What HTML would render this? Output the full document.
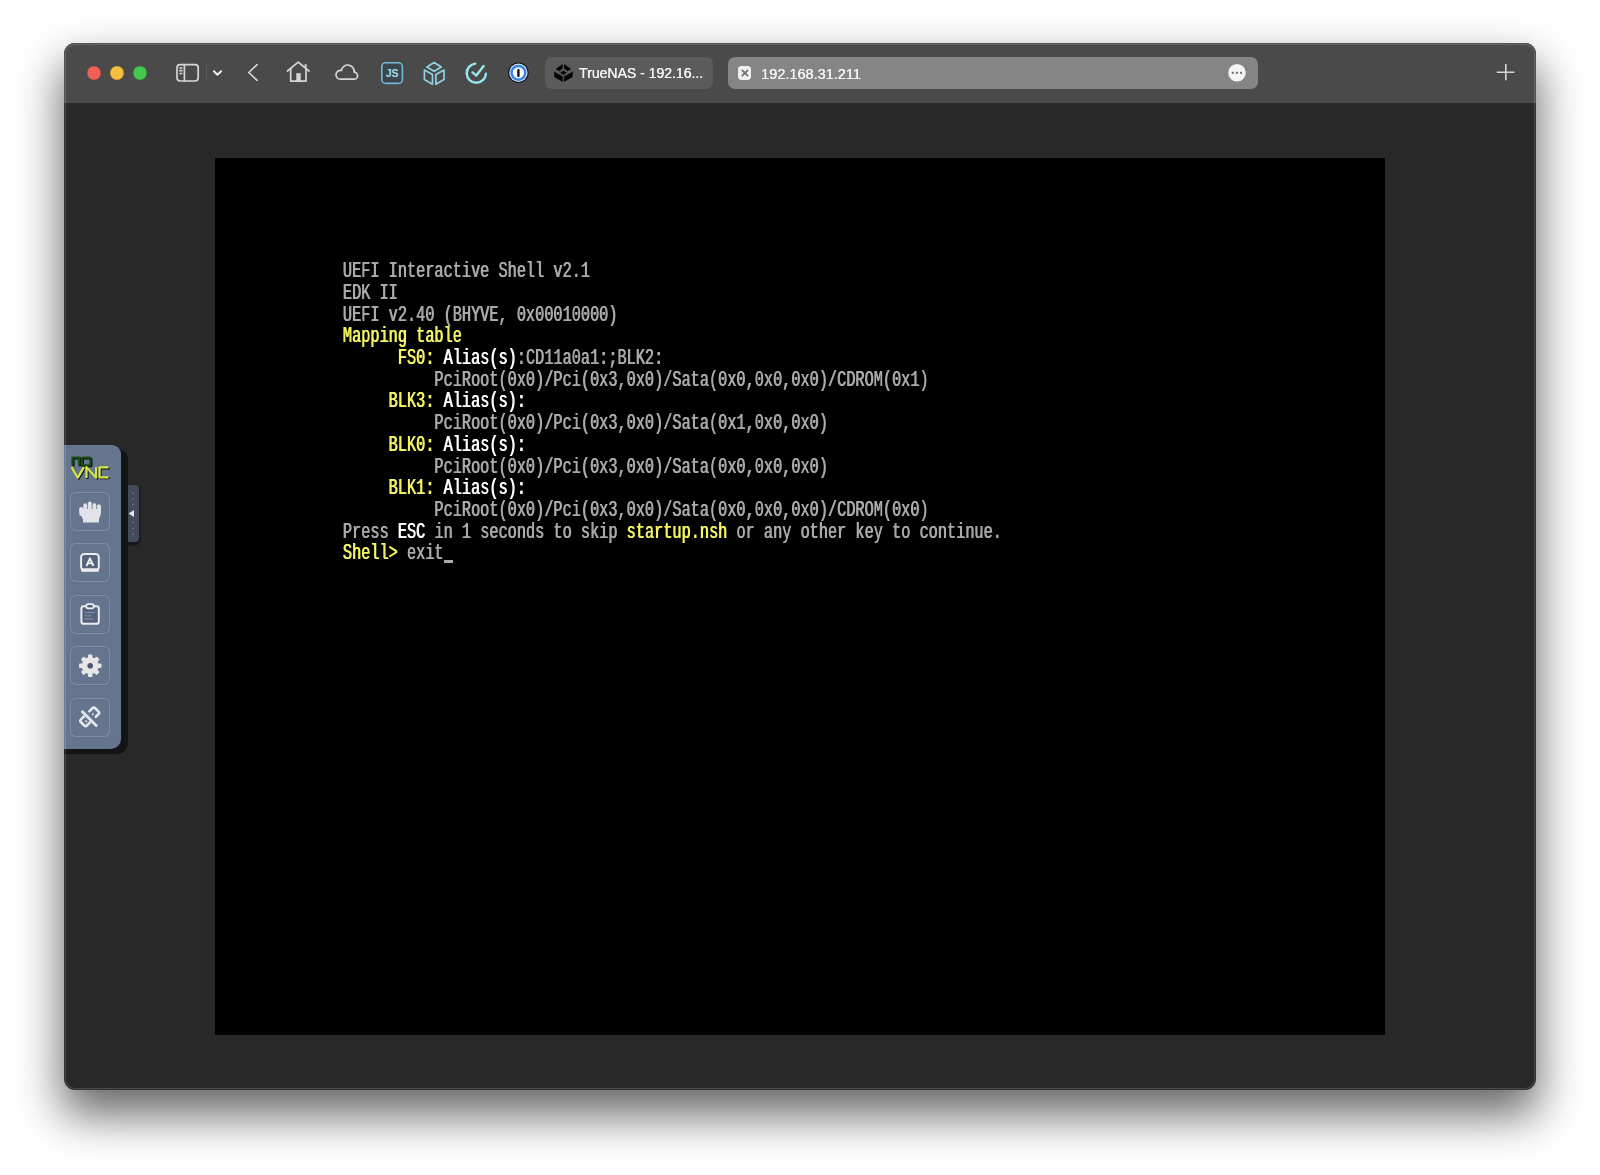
<!DOCTYPE html>
<html><head><meta charset="utf-8">
<style>
html,body{margin:0;padding:0;}
body{width:1600px;height:1175px;overflow:hidden;background:#fff;position:relative;font-family:"Liberation Sans",sans-serif;}
.win{position:absolute;left:64px;top:43px;width:1472px;height:1047px;border-radius:11px;background:#282828;box-shadow:0 23px 46px 2px rgba(0,0,0,0.6);overflow:hidden;}
.winborder{position:absolute;left:64px;top:43px;width:1472px;height:1047px;border-radius:11px;box-shadow:inset 0 0 0 1px rgba(255,255,255,0.05);pointer-events:none;}
.winborder2{position:absolute;left:65px;top:44px;width:1470px;height:1045px;border-radius:10px;box-shadow:inset 0 0 0 1px rgba(255,255,255,0.15);pointer-events:none;}
.tb{position:absolute;left:0;top:0;width:1472px;height:60px;background:#4a4a4a;}
.abs{position:absolute;}
.screen{position:absolute;left:150.6px;top:115px;width:1170.8px;height:877.2px;background:#000;}
.term{position:absolute;left:0;top:0;font-family:"Liberation Mono",monospace;font-weight:normal;font-size:15.25px;white-space:pre;color:#aaa;text-shadow:0.7px 0 0 currentColor;}
.ln{position:absolute;left:128px;height:16px;line-height:16px;transform:scaleY(1.49);transform-origin:0 0;}
.tabtxt,.urltxt{font-size:14.5px;color:#f2f2f2;line-height:16px;white-space:nowrap;text-shadow:0.35px 0 0 currentColor;will-change:transform;}
.nvb{position:absolute;left:6.3px;width:39.3px;height:39.3px;border-radius:6px;box-shadow:inset 0 0 0 1px rgba(255,255,255,0.17);}
.y{color:#f5f562}.w{color:#fff}
</style></head><body>
<div class="win">
  <div class="tb">
    <div class="abs" style="left:23px;top:23.3px;width:13.8px;height:13.8px;border-radius:50%;background:#ef6158;box-shadow:inset 0 0 0 0.5px rgba(0,0,0,0.25)"></div>
    <div class="abs" style="left:46.1px;top:23.3px;width:13.8px;height:13.8px;border-radius:50%;background:#f5be3e;box-shadow:inset 0 0 0 0.5px rgba(0,0,0,0.25)"></div>
    <div class="abs" style="left:69px;top:23.3px;width:13.8px;height:13.8px;border-radius:50%;background:#45c84f;box-shadow:inset 0 0 0 0.5px rgba(0,0,0,0.25)"></div>
    <svg class="abs" style="left:0;top:0" width="1472" height="60" viewBox="0 0 1472 60">
      <g fill="none" stroke="#d6d6d6" stroke-width="1.7" stroke-linecap="round" stroke-linejoin="round">
        <!-- sidebar -->
        <rect x="113" y="21.6" width="21.2" height="16.4" rx="3.2"/>
        <line x1="120.4" y1="21.6" x2="120.4" y2="38"/>
        <line x1="116" y1="25" x2="117.8" y2="25"/><line x1="116" y1="27.7" x2="117.8" y2="27.7"/><line x1="116" y1="30.5" x2="117.8" y2="30.5"/>
        <!-- chevron down -->
        <polyline points="149.9,28.3 153.5,31.7 157.1,28.3" stroke="#f0f0f0" stroke-width="2"/>
        <!-- back -->
        <polyline points="193,21.7 184.8,29.5 193,37.3"/>
        <!-- home -->
        <polyline points="223.5,28 234.2,19.2 245,28"/>
        <polyline points="226.7,25.5 226.7,38.2 242,38.2 242,25.5"/>
        <line x1="241.6" y1="21.2" x2="241.6" y2="25" stroke-width="2" stroke-linecap="butt"/>
        <!-- cloud -->
        <path d="M276.4,36.2 A4.4,4.4 0 1 1 277.45,27.53 A6.4,6.4 0 0 1 290.14,29.2 A3.5,3.5 0 0 1 290,36.2 Z"/>
      </g>
      <rect x="232.3" y="30.2" width="4.4" height="8" fill="#d6d6d6"/>
      <line x1="118.9" y1="22" x2="118.9" y2="22" />
      <line x1="142.6" y1="21" x2="142.6" y2="37" stroke="#5a5a5a" stroke-width="1"/>
      <!-- JS -->
      <rect x="317.8" y="19.8" width="20.6" height="20.6" rx="4" fill="#3c454c" stroke="#72bcd8" stroke-width="1.6"/>
      <text x="328.1" y="34.3" text-anchor="middle" font-family="Liberation Sans" font-weight="bold" font-size="10.5" fill="#a9dcf2">JS</text>
      <!-- cube -->
      <g fill="none" stroke="#90d2e2" stroke-width="1.7" stroke-linejoin="round">
        <path d="M370.1,19.6 L377.3,23.9 L370.1,28.2 L362.9,23.9 Z"/>
        <path d="M360.4,27 L368.5,31.6 L368.5,41.2 L360.4,36.6 Z"/>
        <path d="M380,27 L371.9,31.6 L371.9,41.2 L380,36.6 Z"/>
      </g>
      <!-- check -->
      <g fill="none" stroke="#96e8ee" stroke-width="2.4" stroke-linecap="round" stroke-linejoin="round">
        <path d="M411.3,20.6 A9.6,9.6 0 1 0 421.9,30.8"/>
        <polyline points="408.6,29.4 412.3,32.6 419.6,23"/>
      </g>
      <!-- 1password -->
      <circle cx="454.4" cy="29.8" r="10.3" fill="#101216"/>
      <circle cx="454.4" cy="29.8" r="9.2" fill="#d2e8fb"/>
      <circle cx="454.4" cy="29.8" r="8.1" fill="#3b84e2"/>
      <circle cx="454.4" cy="29.8" r="5.6" fill="#f6fbff"/>
      <rect x="453.2" y="26" width="2.4" height="7.9" rx="1" fill="#141414"/>
    </g>
    </svg>
    <div class="abs" style="left:481px;top:14.2px;width:168px;height:31.6px;border-radius:7px;background:#5b5b5b"></div>
    <svg class="abs" style="left:490.4px;top:21.25px" width="20" height="18" viewBox="0 0 20 18">
      <g fill="#050505" stroke="#050505" stroke-width="0.3" stroke-linejoin="round">
        <path d="M1.91,5.06 L8.48,0.25 L8.63,4.22 L5.35,6.94 Z"/>
        <path d="M16.91,5.06 L10.35,0.25 L10.19,4.22 L13.48,6.94 Z"/>
        <path d="M6.44,8.75 L9.41,6.63 L12.38,8.75 L9.41,10.88 Z"/>
        <path d="M0.1,7.75 L8.63,12.66 L8.63,17.66 L0.5,12.97 Z"/>
        <path d="M18.73,7.75 L10.19,12.66 L10.19,17.66 L18.32,12.97 Z"/>
      </g>
    </svg>
    <div class="abs tabtxt" style="left:515.3px;top:22px;font-size:14px">TrueNAS - 192.16...</div>
    <div class="abs" style="left:663.5px;top:14.2px;width:530px;height:31.6px;border-radius:7px;background:#858585"></div>
    <div class="abs" style="left:673.5px;top:23px;width:13.8px;height:14px;border-radius:3.4px;background:#f0f0f0"></div>
    <svg class="abs" style="left:673.5px;top:23px" width="14" height="14" viewBox="0 0 14 14"><g stroke="#747474" stroke-width="1.8" stroke-linecap="round"><line x1="4.3" y1="4.4" x2="9.6" y2="9.7"/><line x1="9.6" y1="4.4" x2="4.3" y2="9.7"/></g></svg>
    <div class="abs urltxt" style="left:697px;top:23px">192.168.31.211</div>
    <svg class="abs" style="left:1163px;top:20px" width="20" height="20" viewBox="0 0 20 20"><circle cx="10" cy="9.8" r="8.8" fill="#f4f4f4"/><g fill="#6b6b6b"><rect x="4.8" y="8.8" width="2" height="2"/><rect x="8.9" y="8.8" width="2" height="2"/><rect x="13.1" y="8.8" width="2" height="2"/></g></svg>
    <svg class="abs" style="left:1430px;top:18px" width="24" height="24" viewBox="0 0 24 24"><g stroke="#d8d8d8" stroke-width="1.6" stroke-linecap="round"><line x1="11.8" y1="3.5" x2="11.8" y2="18.7"/><line x1="3.4" y1="11.2" x2="19.8" y2="11.2"/></g></svg>
  </div>
  <!-- noVNC panel -->
  <div class="abs" style="left:0;top:406px;width:63.6px;height:304.5px;border-radius:0 10px 11px 0;background:#131416;filter:blur(0.5px)"></div>
  <div class="abs" style="left:0;top:401.7px;width:57.2px;height:304.3px;border-radius:0 9px 10px 0;background:#66758e"></div>
  <div class="abs" style="left:62px;top:443px;width:14px;height:58.5px;border-radius:0 5px 5px 0;background:#141518;filter:blur(0.8px)"></div>
  <div class="abs" style="left:63.7px;top:441.5px;width:11.3px;height:57px;border-radius:0 4px 4px 0;background:#434a5a"></div>
  <svg class="abs" style="left:63.7px;top:441.5px" width="12" height="57" viewBox="0 0 12 57">
    <g fill="#7a8398"><circle cx="5.1" cy="8.2" r="0.8"/><circle cx="5.1" cy="14" r="0.8"/><circle cx="5.1" cy="19.5" r="0.8"/><circle cx="5.1" cy="37.5" r="0.8"/><circle cx="5.1" cy="43.5" r="0.8"/><circle cx="5.1" cy="49.5" r="0.8"/></g>
    <path d="M0.6,28.5 L6,25 L6,32 Z" fill="#e8e8ec"/>
  </svg>
  <!-- logo -->
  <svg class="abs" style="left:0;top:400px" width="58" height="50" viewBox="0 400 58 50">
    <g transform="translate(0.9,0.9)" fill="none" stroke="#0a0f08" stroke-width="2.3" stroke-linejoin="round">
      <path d="M8.5,422.3 V414.5 H15.2 V422.3"/>
      <rect x="17.8" y="414.5" width="8.7" height="7.8" rx="1"/>
      <polyline points="7.6,424.2 13.8,434.6 20,424.2"/>
      <polyline points="22.5,435 22.5,424.2 32.2,434.6 32.2,424.2"/>
      <polyline points="44.6,424.4 35.6,424.4 35.6,434.3 44.6,434.3"/>
    </g>
    <g fill="none" stroke="#184a12" stroke-width="2.2" stroke-linejoin="round">
      <path d="M8.5,422.3 V414.5 H15.2 V422.3"/>
      <rect x="17.8" y="414.5" width="8.7" height="7.8" rx="1"/>
    </g>
    <g fill="none" stroke="#d4e44c" stroke-width="2.3" stroke-linejoin="round">
      <polyline points="7.6,424.2 13.8,434.6 20,424.2"/>
      <polyline points="22.5,435 22.5,424.2 32.2,434.6 32.2,424.2"/>
      <polyline points="44.6,424.4 35.6,424.4 35.6,434.3 44.6,434.3"/>
    </g>
  </svg>
  <!-- buttons -->
  <div class="nvb" style="top:448.5px"></div>
  <div class="nvb" style="top:500px"></div>
  <div class="nvb" style="top:551.5px"></div>
  <div class="nvb" style="top:603px"></div>
  <div class="nvb" style="top:654.5px"></div>
  <svg class="abs" style="left:0;top:400px" width="58" height="310" viewBox="0 400 58 310">
    <!-- hand -->
    <g fill="#e2e3ea">
      <rect x="19.3" y="460.2" width="3.8" height="11" rx="1.9"/>
      <rect x="23.9" y="458.6" width="3.8" height="11" rx="1.9"/>
      <rect x="28.5" y="460.2" width="3.8" height="11" rx="1.9"/>
      <rect x="33.1" y="461.3" width="3.8" height="10" rx="1.9"/>
      <rect x="15.3" y="464" width="3.8" height="9" rx="1.9"/>
      <path d="M15.3,468 L19,476.5 L19,479.4 L35,479.4 L35,476 L36.9,471 L36.9,466 L15.3,466 Z"/>
    </g>
    <!-- keyboard A -->
    <rect x="17.1" y="510.9" width="17.7" height="16.4" rx="3.2" fill="#56627b" stroke="#ececf0" stroke-width="2"/>
    <rect x="17.1" y="525.3" width="17.7" height="3.4" rx="1.5" fill="#ececf0"/>
    <path d="M22.4,523 L25.95,515.3 L29.5,523 M23.6,520.4 H28.3" fill="none" stroke="#ececf0" stroke-width="1.9" stroke-linejoin="round"/>
    <!-- clipboard -->
    <rect x="17.4" y="563.2" width="17.4" height="17.6" rx="2.4" fill="#56627b" stroke="#ececf0" stroke-width="2"/>
    <rect x="22.2" y="561.2" width="7.6" height="4.2" rx="2.1" fill="#56627b" stroke="#ececf0" stroke-width="1.8"/>
    <g stroke="#8494b4" stroke-width="1"><line x1="20.8" y1="569.6" x2="31.2" y2="569.6"/><line x1="20.8" y1="572.8" x2="27.5" y2="572.8"/><line x1="20.8" y1="576" x2="29.5" y2="576"/></g>
    <!-- gear -->
    <g transform="translate(26.2,622.8)" fill="#e6e6e6">
      <circle r="8.5"/>
      <g id="teeth"><rect x="-2.25" y="-11.2" width="4.5" height="4.5" rx="1"/></g>
      <use href="#teeth" transform="rotate(45)"/><use href="#teeth" transform="rotate(90)"/><use href="#teeth" transform="rotate(135)"/>
      <use href="#teeth" transform="rotate(180)"/><use href="#teeth" transform="rotate(225)"/><use href="#teeth" transform="rotate(270)"/><use href="#teeth" transform="rotate(315)"/>
      <circle r="2.8" fill="#4f5472"/>
    </g>
    <!-- disconnect -->
    <g fill="none" stroke="#e4e8f0" stroke-width="2.5" stroke-linecap="round" stroke-linejoin="round">
      <path d="M18.4,668.8 L32.2,682.4" stroke-width="2.8"/>
      <path d="M25.3,668.3 L28.6,665 Q29.8,663.8 31,665 L34.6,668.6 Q35.8,669.8 34.6,671 L31.8,673.8"/>
      <path d="M19.8,673.6 L16.8,676.6 Q15.6,677.8 16.8,679 L20.4,682.6 Q21.6,683.8 22.8,682.6 L26,679.4"/>
    </g>
    <circle cx="28.8" cy="671.2" r="1" fill="#e4e8f0"/>
    <circle cx="22.1" cy="678.2" r="1" fill="#e4e8f0"/>
  </svg>
  <div class="screen">
    <div class="term">
      <div class="ln" style="top:101.25px">UEFI Interactive Shell v2.1</div>
      <div class="ln" style="top:122.95px">EDK II</div>
      <div class="ln" style="top:144.65px">UEFI v2.40 (BHYVE, 0x00010000)</div>
      <div class="ln y" style="top:166.35px">Mapping table</div>
      <div class="ln" style="top:188.05px">      <span class="y">FS0: </span><span class="w">Alias(s)</span>:CD11a0a1:;BLK2:</div>
      <div class="ln" style="top:209.75px">          PciRoot(0x0)/Pci(0x3,0x0)/Sata(0x0,0x0,0x0)/CDROM(0x1)</div>
      <div class="ln" style="top:231.45px">     <span class="y">BLK3: </span><span class="w">Alias(s):</span></div>
      <div class="ln" style="top:253.15px">          PciRoot(0x0)/Pci(0x3,0x0)/Sata(0x1,0x0,0x0)</div>
      <div class="ln" style="top:274.85px">     <span class="y">BLK0: </span><span class="w">Alias(s):</span></div>
      <div class="ln" style="top:296.55px">          PciRoot(0x0)/Pci(0x3,0x0)/Sata(0x0,0x0,0x0)</div>
      <div class="ln" style="top:318.25px">     <span class="y">BLK1: </span><span class="w">Alias(s):</span></div>
      <div class="ln" style="top:339.95px">          PciRoot(0x0)/Pci(0x3,0x0)/Sata(0x0,0x0,0x0)/CDROM(0x0)</div>
      <div class="ln" style="top:361.65px">Press <span class="w">ESC</span> in 1 seconds to skip <span class="y">startup.nsh</span> or any other key to continue.</div>
      <div class="ln" style="top:383.35px"><span class="y">Shell&gt;</span> exit</div>
      <div class="abs" style="left:229.4px;top:401.8px;width:9px;height:3.4px;background:#aaa"></div>
    </div>
  </div>
</div>
<div class="winborder"></div>
<div class="winborder2"></div>
</body></html>
